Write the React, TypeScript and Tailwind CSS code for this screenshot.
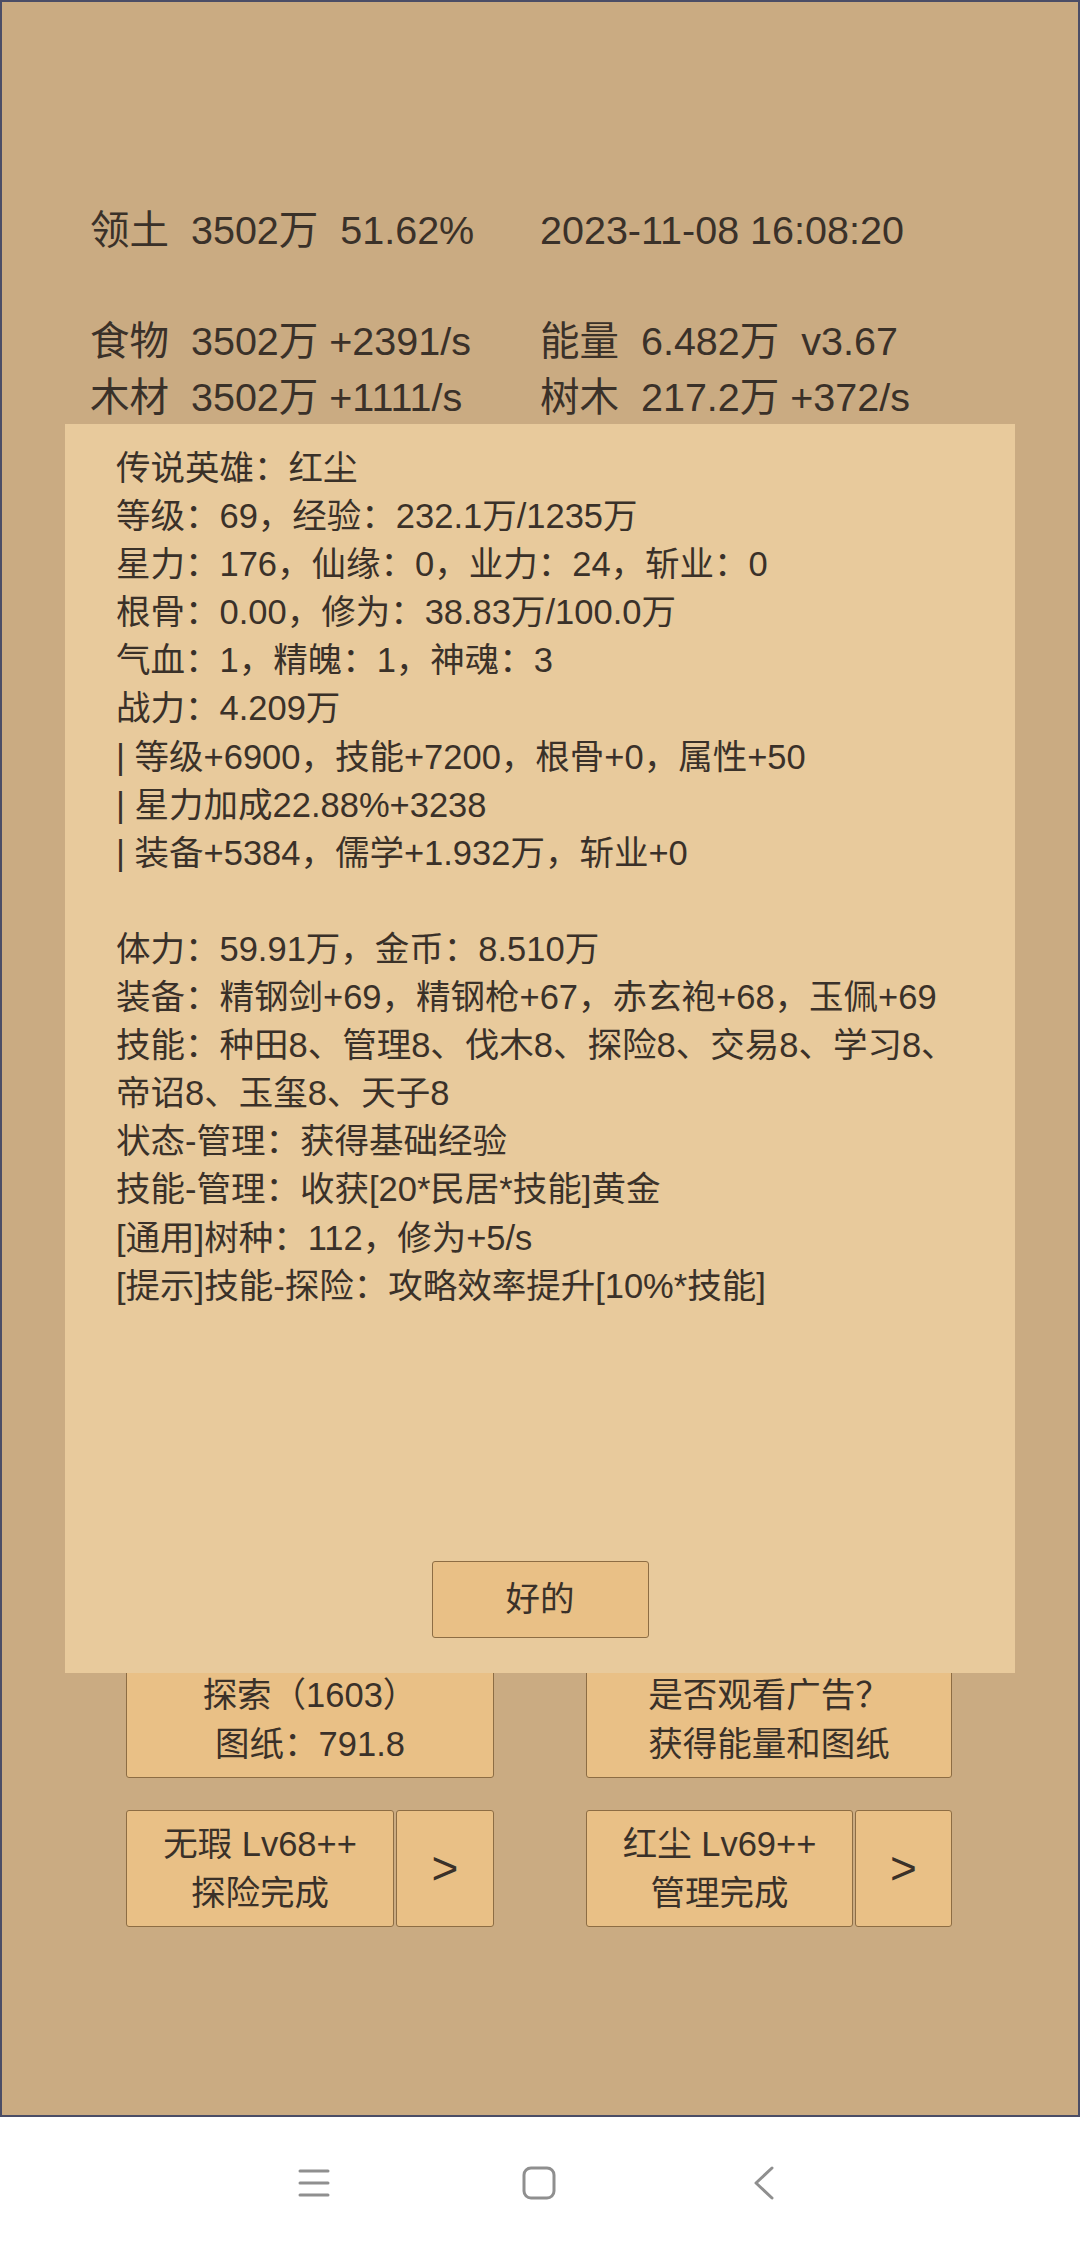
const font = "font-['Liberation_Sans','Noto_Sans_CJK_SC',sans-serif]"

const dialogLines = [
  '传说英雄：红尘',
  '等级：69，经验：232.1万/1235万',
  '星力：176，仙缘：0，业力：24，斩业：0',
  '根骨：0.00，修为：38.83万/100.0万',
  '气血：1，精魄：1，神魂：3',
  '战力：4.209万',
  '| 等级+6900，技能+7200，根骨+0，属性+50',
  '| 星力加成22.88%+3238',
  '| 装备+5384，儒学+1.932万，斩业+0',
  '',
  '体力：59.91万，金币：8.510万',
  '装备：精钢剑+69，精钢枪+67，赤玄袍+68，玉佩+69',
  '技能：种田8、管理8、伐木8、探险8、交易8、学习8、',
  '帝诏8、玉玺8、天子8',
  '状态-管理：获得基础经验',
  '技能-管理：收获[20*民居*技能]黄金',
  '[通用]树种：112，修为+5/s',
  '[提示]技能-探险：攻略效率提升[10%*技能]',
]

function GameButton({ lines, className = '' }: { lines: string[]; className?: string }) {
  return (
    <div
      className={`flex flex-col items-center justify-center bg-[#e9c086] border border-[#8d6d44] rounded-[3px] leading-[49px] whitespace-pre ${className}`}
    >
      {lines.map((l) => (
        <span key={l}>{l}</span>
      ))}
    </div>
  )
}

export default function App() {
  return (
    <div className={`w-[1080px] h-[2248px] flex flex-col bg-white text-[#3a3129] ${font}`}>
      {/* Game area */}
      <div className="relative h-[2117px] bg-[#caab82] border-2 border-[#4b4d66] overflow-hidden">
        {/* Resource header */}
        <div className="pt-[201px] pl-[88px] text-[39.5px] leading-[55.5px] whitespace-pre">
          <div className="grid grid-cols-[450px_1fr]">
            <span>领土  3502万  51.62%</span>
            <span>2023-11-08 16:08:20</span>
          </div>
          <div className="h-[55.5px]" />
          <div className="grid grid-cols-[450px_1fr]">
            <span>食物  3502万 +2391/s</span>
            <span>能量  6.482万  v3.67</span>
          </div>
          <div className="grid grid-cols-[450px_1fr]">
            <span>木材  3502万 +1111/s</span>
            <span>树木  217.2万 +372/s</span>
          </div>
        </div>

        {/* Action buttons */}
        <div className="mt-[1237px] pl-[124px] text-[34.5px]">
          <div className="grid grid-cols-[368px_366px] gap-x-[92px]">
            <GameButton className="h-[116px]" lines={['探索（1603）', '图纸：791.8']} />
            <GameButton className="h-[116px]" lines={['是否观看广告？', '获得能量和图纸']} />
          </div>
          <div className="grid grid-cols-[368px_366px] gap-x-[92px] mt-[32px]">
            <div className="flex gap-[2px]">
              <GameButton className="h-[117px] w-[268px]" lines={['无瑕 Lv68++', '探险完成']} />
              <GameButton className="h-[117px] flex-1 text-[46px]" lines={['>']} />
            </div>
            <div className="flex gap-[2px]">
              <GameButton className="h-[117px] w-[267px]" lines={['红尘 Lv69++', '管理完成']} />
              <GameButton className="h-[117px] flex-1 text-[46px]" lines={['>']} />
            </div>
          </div>
        </div>

        {/* Hero dialog */}
        <div className="absolute left-[63px] top-[422px] w-[950px] h-[1249px] bg-[#e8ca9c] flex flex-col">
          <div className="pt-[20px] pl-[51px] text-[34.5px] leading-[48.1px] whitespace-pre">
            {dialogLines.map((l, i) => (
              <div key={i} className="h-[48.1px]">
                {l}
              </div>
            ))}
          </div>
          <div className="mt-auto mb-[35px] self-center w-[217px] h-[77px] flex items-center justify-center bg-[#e9c086] border border-[#8d6d44] rounded-[3px] text-[34.5px]">
            好的
          </div>
        </div>
      </div>

      {/* System navigation bar */}
      <div className="h-[131px] pl-[201px] grid grid-cols-[225px_225px_225px] items-center justify-items-center">
        <svg width="32" height="30" viewBox="0 0 32 30" fill="none" stroke="#8f8f8f" strokeWidth="3" strokeLinecap="round">
          <path d="M2 3h28M2 15h28M2 27h28" />
        </svg>
        <svg width="34" height="34" viewBox="0 0 34 34" fill="none" stroke="#8f8f8f" strokeWidth="3">
          <rect x="2" y="2" width="30" height="30" rx="7" />
        </svg>
        <svg width="22" height="34" viewBox="0 0 22 34" fill="none" stroke="#8f8f8f" strokeWidth="3" strokeLinecap="round" strokeLinejoin="round">
          <path d="M19 2L3 17l16 15" />
        </svg>
      </div>
    </div>
  )
}
